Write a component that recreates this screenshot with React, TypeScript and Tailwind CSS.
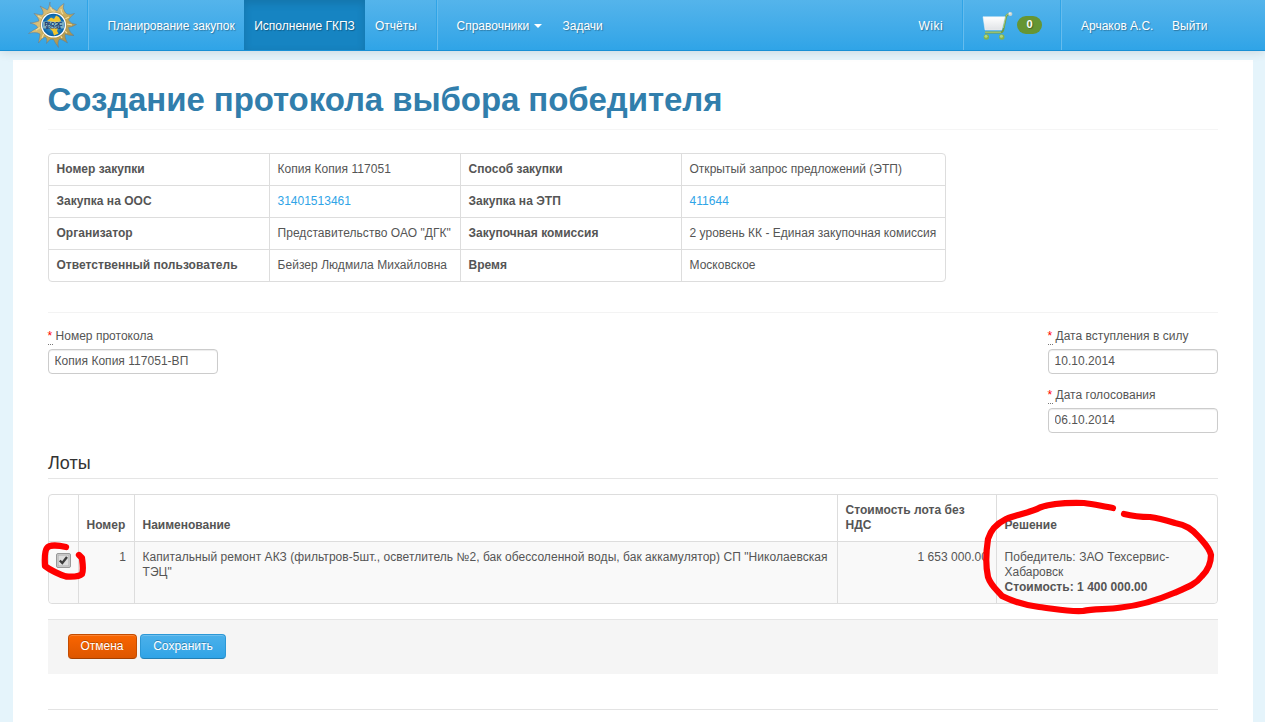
import React from "react";

const info: [string, string, string, string, boolean][] = [
  ["Номер закупки", "Копия Копия 117051", "Способ закупки", "Открытый запрос предложений (ЭТП)", false],
  ["Закупка на ООС", "31401513461", "Закупка на ЭТП", "411644", true],
  ["Организатор", 'Представительство ОАО "ДГК"', "Закупочная комиссия", "2 уровень КК - Единая закупочная комиссия", false],
  ["Ответственный пользователь", "Бейзер Людмила Михайловна", "Время", "Московское", false],
];

function Logo() {
  return (
    <svg width="50" height="50" viewBox="0 0 50 50" className="block [text-shadow:none]">
      <defs>
        <linearGradient id="ray" x1="0" y1="0" x2="1" y2="1">
          <stop offset="0" stopColor="#a89a62" />
          <stop offset="0.35" stopColor="#dcc078" />
          <stop offset="0.6" stopColor="#c2a552" />
          <stop offset="1" stopColor="#948450" />
        </linearGradient>
        <radialGradient id="globe">
          <stop offset="0" stopColor="#4fb0e4" />
          <stop offset="1" stopColor="#0660a6" />
        </radialGradient>
      </defs>
      <path
        d="M22 2 Q21 7 26 9 L29 11 Q31 6 36 3.5 Q34 8 37 12 L39 14 Q42 15 46.500 13.500 Q42 17 40.500 20 Q43 24 48.500 24.500 Q44 27 40.500 27.500 Q41 32 46 35.500 Q40 35.500 37.500 34 Q36 36 39.500 43 Q34 39.500 32 39 Q29 41 30.500 47.500 Q27 43 25.500 39.500 Q22 38 18.500 43.500 Q19.500 38 17 37 Q14 38 10.500 43 Q11.500 37.500 12 34 Q8 31.500 0.500 33.500 Q5 30 9.500 28 Q10 25 2 23 Q7 22.500 11 21 Q11 18 6 13.500 Q11 14.500 14 15 Q17 13 12 6 Q17 8.500 19.500 10 Q21 8 22 2 Z"
        fill="url(#ray)" stroke="#64788a" strokeWidth="0.5"
      />
      <path d="M23 7 Q22 10 27 12 M33 9 Q33 12 35 14 M41 17 L37 19 M44 25 L39 24 M39 33 L36 30 M34 38 L32 35 M14 38 L16 33 M8 30 L13 27 M10 16 L15 19" stroke="#f0dc9c" strokeWidth="1.2" fill="none" />
      <circle cx="25.500" cy="25" r="13.300" fill="#b1964d" />
      <circle cx="25.500" cy="25" r="12.600" fill="#fff" />
      <circle cx="25.500" cy="25" r="11.200" fill="url(#globe)" />
      <path d="M19 21 L23 17.500 L26 19 L28 15.500 L31 17 L33 21 L29 22.500 Z M21 28 L30 28 L29 31 L30.500 33.500 L26 35.500 L24.500 31 Z" fill="#f3c62d" />
      <path d="M15 21.500 H36 V28.500 H15 Z" fill="#d9e8d2" opacity="0.55" />
      <text x="25.500" y="25.800" textAnchor="middle" fontSize="5.800" fontWeight="bold" fill="#0b2b63" fontFamily="Liberation Sans, sans-serif" textLength="18">РАО ЭС</text>
      <text x="25.500" y="29" textAnchor="middle" fontSize="3.400" fontWeight="bold" fill="#0b2b63" fontFamily="Liberation Sans, sans-serif" textLength="15">ВОСТОКА</text>
    </svg>
  );
}

function Cart() {
  return (
    <svg width="36" height="36" viewBox="0 0 36 36" className="block">
      <defs>
        <linearGradient id="basket" x1="0" y1="0" x2="0" y2="1">
          <stop offset="0" stopColor="#fff" />
          <stop offset="1" stopColor="#e0e3e6" />
        </linearGradient>
      </defs>
      <path d="M32 7 Q28.500 7 28 10 L25.500 22 Q25 25.500 22 25.500 H7" fill="none" stroke="#6f9c48" strokeWidth="1.800" />
      <path d="M31.500 6.600 Q28.300 6.600 27.800 9.600 L25.300 21" fill="none" stroke="#b2d584" strokeWidth="0.800" />
      <path d="M5 9.800 H27 L23.700 23 H7 Z" fill="url(#basket)" stroke="#f4f6f7" strokeWidth="0.500" />
      <path d="M7 25.200 H23" stroke="#b5d77e" strokeWidth="0.900" />
      <circle cx="32.300" cy="7" r="2.100" fill="#c9d3cf" />
      <circle cx="31.800" cy="6.500" r="0.900" fill="#eef2f0" />
      <circle cx="8.400" cy="30" r="2.700" fill="#85b34b" />
      <circle cx="23.800" cy="30" r="2.700" fill="#85b34b" />
      <circle cx="8" cy="29.300" r="1.500" fill="#b2d77f" />
      <circle cx="23.400" cy="29.300" r="1.500" fill="#b2d77f" />
    </svg>
  );
}

function Divider() {
  return <div className="h-[50px] w-[2px] shrink-0 border-l border-r border-l-[#2fa4e7] border-r-[#66bced]" />;
}

function Field({ label, value }: { label: string; value: string }) {
  return (
    <div className="h-[59px] w-[170px]">
      <label className="flex h-[15px] items-start gap-[3px] whitespace-nowrap leading-[15px] tracking-[0.02px]">
        <abbr className="-ml-[0.5px] h-[16px] w-[5px] border-b border-dotted border-[#777] text-[#f00] no-underline">*</abbr>
        {label}
      </label>
      <input
        type="text"
        defaultValue={value}
        className="mt-[5px] block h-[25px] w-full rounded border border-[#ccc] bg-white px-[5.500px] pb-[2px] text-[12px] tracking-[0.03px] text-[#555] shadow-[inset_0_1px_1px_rgba(0,0,0,0.075)] outline-none"
      />
    </div>
  );
}

export default function App() {
  return (
    <div className="relative h-[722px] w-[1265px] overflow-hidden bg-[#e5f4fb] font-['Liberation_Sans',Arial,sans-serif] text-[12px] leading-[15px] text-[#555]">
      <nav className="relative flex h-[51px] border-b border-[#1990d5] bg-gradient-to-b from-[#54b4eb] to-[#2fa4e7] leading-[52px] whitespace-nowrap text-white shadow-[0_1px_10px_rgba(0,0,0,0.12)] [text-shadow:1px_1px_1px_rgba(0,0,0,0.3)]">
        <div className="w-[87px] pl-[28px]"><Logo /></div>
        <Divider />
        <a className="w-[155px] pl-[18.500px]">Планирование закупок</a>
        <a className="h-[50px] w-[121px] bg-[#1684c2] text-center shadow-[inset_0_3px_8px_rgba(0,0,0,0.13)]">Исполнение ГКПЗ</a>
        <a className="w-[71px] pl-[10px]">Отчёты</a>
        <Divider />
        <a className="flex h-[52px] w-[124.500px] items-center pl-[18.500px]">
          <span>Справочники</span>
          <span className="ml-[5px] border-x-4 border-t-4 border-x-transparent border-t-white" />
        </a>
        <a>Задачи</a>
        <div className="ml-auto flex w-[347px]">
          <a className="w-[44px] pl-[0.5px] text-[12px] tracking-[0.5px]">Wiki</a>
          <Divider />
          <div className="flex h-[50px] w-[96px] items-center pl-[14px]">
            <Cart />
            <span className="ml-[3px] h-[18px] w-[25px] rounded-[9px] bg-[#669533] text-center text-[11px] font-bold leading-[17px]">0</span>
          </div>
          <Divider />
          <a className="w-[110px] pl-[19px]">Арчаков А.С.</a>
          <a>Выйти</a>
        </div>
      </nav>

      <main className="mt-[9px] ml-[13px] h-[662px] w-[1240px] bg-white px-[35px] pt-[20px]">
        <div className="h-[50px] border-b border-[#f5f5f5] pt-px">
          <h1 className="-ml-[0.5px] text-[33px] leading-[38px] font-bold tracking-[-0.080px] whitespace-nowrap text-[#317eac]">Создание протокола выбора победителя</h1>
        </div>

        <div className="mt-[23px] w-[898px] rounded border border-[#ddd]">
          {info.map(([a, b, c, d, link], i) => (
            <div key={a} className={i ? "flex border-t border-[#ddd]" : "flex"}>
              <div className="w-[220px] py-2 pl-[7.500px] font-bold tracking-[0.03px]">{a}</div>
              <div className={link ? "w-[191px] border-l border-[#ddd] py-2 pl-[7.500px] text-[#2fa4e7]" : "w-[191px] border-l border-[#ddd] py-2 pl-[7.500px] tracking-[0.05px] whitespace-nowrap"}>{b}</div>
              <div className="w-[221px] border-l border-[#ddd] py-2 pl-[7.500px] font-bold tracking-[0.03px]">{c}</div>
              <div className={link ? "w-[264px] border-l border-[#ddd] py-2 pl-[7.500px] tracking-[0.05px] text-[#2fa4e7]" : "w-[264px] border-l border-[#ddd] py-2 pl-[7.500px] tracking-[0.02px]"}>{d}</div>
            </div>
          ))}
        </div>

        <div className="mt-[30px] flex h-[141px] justify-between border-t border-[#f3f3f3] pt-[16px]">
          <Field label="Номер протокола" value="Копия Копия 117051-ВП" />
          <div>
            <Field label="Дата вступления в силу" value="10.10.2014" />
            <Field label="Дата голосования" value="06.10.2014" />
          </div>
        </div>

        <h2 className="h-[26px] border-b border-[#e5e5e5] text-[18px] leading-[20px] text-[#333]">Лоты</h2>

        <div className="relative mt-[15px]">
          <table className="w-[1170px] table-fixed border-separate border-spacing-0 rounded border border-[#ddd]">
            <colgroup>
              <col className="w-[29px]" />
              <col className="w-[56px]" />
              <col className="w-[703px]" />
              <col className="w-[159px]" />
              <col className="w-[221px]" />
            </colgroup>
            <thead>
              <tr className="h-[46px] text-left align-bottom">
                <th />
                <th className="border-l border-[#ddd] px-[7.500px] pb-2">Номер</th>
                <th className="border-l border-[#ddd] px-[7.500px] pb-2">Наименование</th>
                <th className="border-l border-[#ddd] px-[7.500px] pb-2 tracking-[0.03px]">Стоимость лота без НДС</th>
                <th className="border-l border-[#ddd] px-[7.500px] pb-2">Решение</th>
              </tr>
            </thead>
            <tbody>
              <tr className="h-[62px] bg-[#f9f9f9] align-top">
                <td className="rounded-bl border-t border-[#ddd] pt-[11px] pl-[7px]">
                  <svg width="15" height="15" viewBox="0 0 15 15" className="block">
                    <rect x="0.500" y="0.500" width="14" height="14" rx="1.500" fill="#c9c9c9" stroke="#999" />
                    <rect x="2.200" y="2.200" width="10.600" height="10.600" fill="#dedede" stroke="#b0b0b0" strokeWidth="0.600" />
                    <path d="M3.800 7.500 L6.300 10 L11 4" fill="none" stroke="#3c3c3c" strokeWidth="2.400" />
                  </svg>
                </td>
                <td className="border-t border-l border-[#ddd] px-2 pt-2 text-right">1</td>
                <td className="border-t border-l border-[#ddd] py-2 pl-[7.500px] tracking-[0.048px] whitespace-nowrap">
                  Капитальный ремонт АКЗ (фильтров-5шт., осветлитель №2, бак обессоленной воды, бак аккамулятор) СП "Николаевская<br />ТЭЦ"
                </td>
                <td className="border-t border-l border-[#ddd] px-2 pt-2 text-right tracking-[0.04px]">1 653 000.00</td>
                <td className="rounded-br border-t border-l border-[#ddd] py-2 pl-[7.500px]">
                  <span className="tracking-[0.08px]">Победитель: ЗАО Техсервис-</span><br />Хабаровск<br /><b className="tracking-[0.03px]">Стоимость: 1 400 000.00</b>
                </td>
              </tr>
            </tbody>
          </table>
          <svg width="46" height="42" viewBox="40 540 46 42" className="pointer-events-none absolute top-[46px] left-[-8px]">
            <path d="M66 547 C57 545 49 545 47 548 C44.500 551 44.500 558 45 566 C50 570 60 575 66 576.500 C73 577 79 577 82 574 C84 569 82 560 82 558 C81 557 80 556 79 555" fill="none" stroke="#f00" strokeWidth="6.300" strokeLinecap="round" strokeLinejoin="round" />
          </svg>
          <svg width="240" height="122" viewBox="978 496 240 122" className="pointer-events-none absolute top-[2px] left-[930px]">
            <path d="M1113 508 C1103 506.500 1094 504 1084 503 C1066 502.500 1052 503 1040 507.500 C1030 513 1018 514 1006 519 C996 524 990 532 988 539 C986 552 986 568 988 577 C991 586 997 590 1002 596 C1014 602 1024 605 1039 607 C1056 609 1069 612 1083 611 C1094 608 1107 610 1121 607.500 C1144 605 1160 599 1174 593 C1188 587 1196 584 1202 576 C1208 570 1211 562 1211 555 C1209 547 1204 543 1199 537 C1192 529 1186 525 1175 523 C1165 520 1158 518 1150 517 C1140 517 1132 516 1124 514" fill="none" stroke="#f00" strokeWidth="6.200" strokeLinecap="round" strokeLinejoin="round" />
          </svg>
        </div>

        <div className="mt-[15px] flex h-[55px] gap-[3px] border-t border-[#e5e5e5] bg-[#f5f5f5] pt-[14px] pl-[20px]">
          <button className="h-[25px] w-[69px] rounded border border-[#c44c00] border-b-[#a54000] bg-gradient-to-b from-[#fa6500] to-[#dd5600] pr-px pb-px text-white shadow-[inset_0_1px_0_rgba(255,255,255,0.2)] [text-shadow:0_-1px_0_rgba(0,0,0,0.25)]">Отмена</button>
          <button className="h-[25px] w-[86px] rounded border border-[#2c98d6] border-b-[#237fb4] bg-gradient-to-b from-[#4bb0ea] to-[#2fa4e7] pb-px text-white shadow-[inset_0_1px_0_rgba(255,255,255,0.2)] [text-shadow:0_-1px_0_rgba(0,0,0,0.25)]">Сохранить</button>
        </div>
        <hr className="mt-[35px] border-t border-[#e3e3e3]" />
      </main>
    </div>
  );
}
